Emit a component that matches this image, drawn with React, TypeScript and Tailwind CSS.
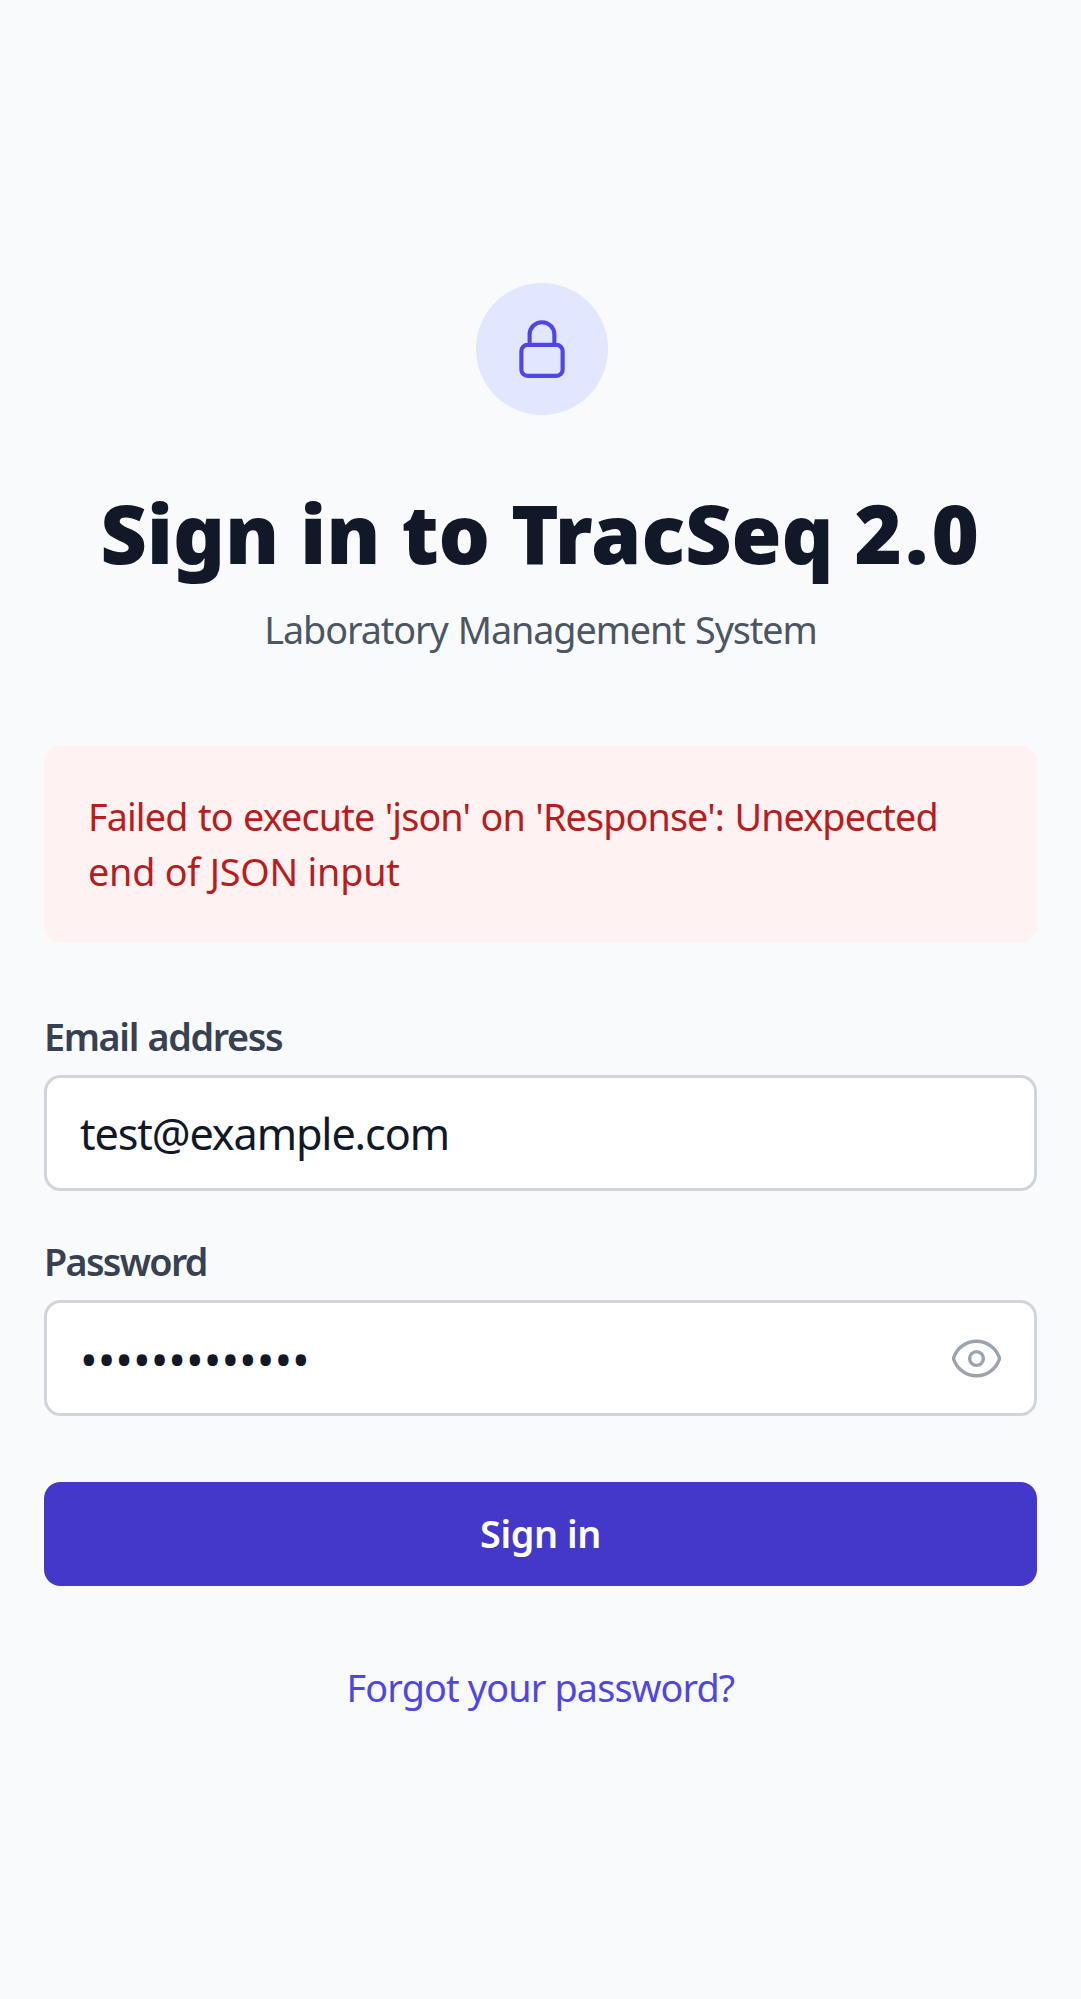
import type { ReactNode } from "react";

function LockIcon() {
  return (
    <svg className="size-[66px] text-[#4f46e5]" viewBox="0 0 24 24" fill="none" stroke="currentColor" strokeWidth={1.5} strokeLinecap="round" strokeLinejoin="round" aria-hidden="true">
      <path d="M16.5 10.5V6.75a4.5 4.5 0 1 0-9 0v3.75m-.75 11.25h10.5a2.25 2.25 0 0 0 2.25-2.25v-6.75a2.25 2.25 0 0 0-2.25-2.25H6.75a2.25 2.25 0 0 0-2.25 2.25v6.75a2.25 2.25 0 0 0 2.25 2.25Z" />
    </svg>
  );
}

function EyeIcon() {
  return (
    <svg className="size-[55px]" viewBox="0 0 24 24" fill="none" stroke="currentColor" strokeWidth={1.5} strokeLinecap="round" strokeLinejoin="round" aria-hidden="true">
      <path d="M2.036 12.322a1.012 1.012 0 0 1 0-.639C3.423 7.51 7.36 4.5 12 4.5c4.638 0 8.573 3.007 9.963 7.178.07.207.07.431 0 .639C20.577 16.49 16.64 19.5 12 19.5c-4.638 0-8.573-3.007-9.963-7.178Z" />
      <path d="M15 12a3 3 0 1 1-6 0 3 3 0 0 1 6 0Z" />
    </svg>
  );
}

function Field({ children }: { children: ReactNode }) {
  return (
    <div className="mt-[11px] flex h-[116px] items-center justify-between rounded-[16.5px] border-3 border-[#d1d5db] bg-white pr-[30px] pl-[33px] text-[43.2px] leading-[66px] text-[#111827]">
      {children}
    </div>
  );
}

export default function App() {
  return (
    <main className="flex min-h-[1999px] flex-col bg-[#f9fafb] px-11 pt-[283px] font-['Noto_Sans','Open_Sans',sans-serif] text-[37.75px] leading-[55px]">
      <div className="ml-[432px] flex size-[132px] items-center justify-center rounded-full bg-[#e0e7ff]">
        <LockIcon />
      </div>
      <h1 className="mt-[68px] pl-px text-center text-[81px] leading-[99px] font-black tracking-[-0.1px] whitespace-nowrap text-[#111827]">
        Sign in to TracSeq <span className="tracking-[3px]">2.0</span>
      </h1>
      <p className="mt-5 text-center tracking-[-1.1px] text-[#4b5563] [word-spacing:1.5px]">Laboratory Management System</p>

      <form className="flex flex-col" onSubmit={(e) => e.preventDefault()}>
        <div role="alert" className="mt-[88px] h-[198px] rounded-[16.5px] bg-[#fef2f2] px-11 pt-11 text-[#b91c1c]">
          <p className="tracking-[-0.88px] whitespace-nowrap [word-spacing:1.5px]">Failed to execute 'json' on 'Response': Unexpected</p>
          <p className="tracking-[-0.23px]">end of JSON input</p>
        </div>

        <div className="mt-[66px]">
          <div className="font-semibold tracking-[-1.35px] text-[#374151] [word-spacing:1px]">Email address</div>
          <Field>
            <span className="pt-0.5 tracking-[-1.12px]">test@example.com</span>
          </Field>
        </div>

        <div className="mt-[43px]">
          <div className="font-semibold tracking-[-1.7px] text-[#374151]">Password</div>
          <Field>
            <span className="pt-[2px] text-[47px]">•••••••••••••</span>
            <button type="button" aria-label="Show password" className="text-[#9ca3af]">
              <EyeIcon />
            </button>
          </Field>
        </div>

        <button type="submit" className="mt-[65.5px] h-[104.5px] rounded-[16.5px] bg-[#4338ca] font-semibold tracking-[-0.4px] text-white">Sign in</button>
        <a className="mt-[74px] self-center tracking-[-0.84px] text-[#4f46e5]">Forgot your password?</a>
      </form>
    </main>
  );
}
